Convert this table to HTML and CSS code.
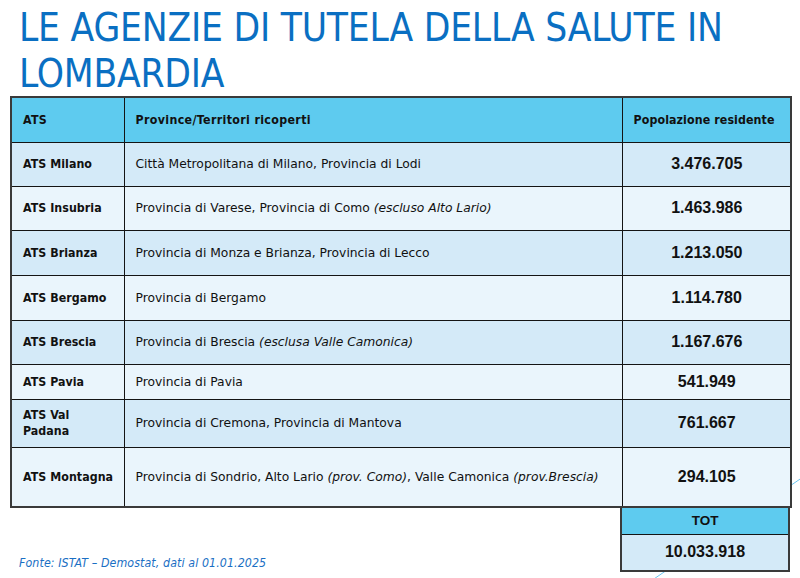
FILE: index.html
```html
<!DOCTYPE html>
<html lang="it">
<head>
<meta charset="utf-8">
<title>Le Agenzie di Tutela della Salute in Lombardia</title>
<link rel="stylesheet" href="styles.css">
</head>
<body>
<div class="slide">
  <svg class="deco" width="800" height="578" viewBox="0 0 800 578" aria-hidden="true">
    <line x1="648" y1="583" x2="806" y2="475" stroke="#6cc6f0" stroke-width="1"/>
  </svg>
  <h1 class="title">LE AGENZIE DI TUTELA DELLA SALUTE IN<br>LOMBARDIA</h1>
  <table class="ats">
    <colgroup>
      <col class="c1"><col class="c2"><col class="c3">
    </colgroup>
    <thead>
      <tr class="h-head">
        <th>ATS</th>
        <th>Province/Territori ricoperti</th>
        <th class="pop">Popolazione residente</th>
      </tr>
    </thead>
    <tbody>
      <tr class="dark h44">
        <td class="name">ATS Milano</td>
        <td>Città Metropolitana di Milano, Provincia di Lodi</td>
        <td class="num">3.476.705</td>
      </tr>
      <tr class="light h44">
        <td class="name">ATS Insubria</td>
        <td>Provincia di Varese, Provincia di Como <em>(escluso Alto Lario)</em></td>
        <td class="num">1.463.986</td>
      </tr>
      <tr class="dark h45">
        <td class="name">ATS Brianza</td>
        <td>Provincia di Monza e Brianza, Provincia di Lecco</td>
        <td class="num">1.213.050</td>
      </tr>
      <tr class="light h45">
        <td class="name">ATS Bergamo</td>
        <td>Provincia di Bergamo</td>
        <td class="num">1.114.780</td>
      </tr>
      <tr class="dark h44">
        <td class="name">ATS Brescia</td>
        <td>Provincia di Brescia <em>(esclusa Valle Camonica)</em></td>
        <td class="num">1.167.676</td>
      </tr>
      <tr class="light h35">
        <td class="name">ATS Pavia</td>
        <td>Provincia di Pavia</td>
        <td class="num">541.949</td>
      </tr>
      <tr class="dark h48">
        <td class="name">ATS Val<br>Padana</td>
        <td>Provincia di Cremona, Provincia di Mantova</td>
        <td class="num">761.667</td>
      </tr>
      <tr class="light h60">
        <td class="name">ATS Montagna</td>
        <td>Provincia di Sondrio, Alto Lario <em>(prov. Como)</em>, Valle Camonica <em>(prov.Brescia)</em></td>
        <td class="num">294.105</td>
      </tr>
    </tbody>
  </table>
  <div class="bottom">
    <p class="source">Fonte: ISTAT – Demostat, dati al 01.01.2025</p>
    <table class="tot">
      <tr class="tot-head"><th>TOT</th></tr>
      <tr class="tot-val"><td>10.033.918</td></tr>
    </table>
  </div>
</div>
</body>
</html>
```
FILE: styles.css
```css
html, body {
  margin: 0;
  padding: 0;
  background: #ffffff;
}

.slide {
  position: relative;
  width: 800px;
  height: 578px;
  overflow: hidden;
  padding: 0 10px;
  box-sizing: border-box;
  font-family: "DejaVu Sans", sans-serif;
  color: #111;
}

.deco {
  position: absolute;
  left: 0;
  top: 0;
  z-index: 0;
}

.title {
  position: relative;
  z-index: 1;
  margin: 0;
  padding: 5px 0 0 9px;
  height: 96px;
  box-sizing: border-box;
  font-family: "DejaVu Sans Condensed", "DejaVu Sans", sans-serif;
  font-weight: normal;
  font-size: 38.5px;
  line-height: 46px;
  letter-spacing: -0.2px;
  color: #0a6fc2;
}

.ats {
  position: relative;
  z-index: 1;
  width: 780px;
  border-collapse: collapse;
  table-layout: fixed;
  border: 2px solid #3a3a3a;
  font-size: 12.3px;
}

.c1 { width: 113px; }
.c2 { width: 498px; }
.c3 { width: 169px; }

.ats th,
.ats td {
  border: 1px solid #141414;
  padding: 0 10px 0 11px;
  text-align: left;
  vertical-align: middle;
  line-height: 16px;
}

.ats th {
  font-family: "DejaVu Sans Condensed", "DejaVu Sans", sans-serif;
  font-weight: bold;
  letter-spacing: 0.35px;
  background: #5ecbef;
}

.ats th.pop {
  letter-spacing: 0.1px;
}

.h-head { height: 45px; }
.h35 { height: 35px; }
.h44 { height: 44px; }
.h45 { height: 45px; }
.h48 { height: 48px; }
.h60 { height: 60px; }

.dark td { background: #d4eaf8; }
.light td { background: #eaf5fc; }

.ats td.name {
  font-family: "DejaVu Sans Condensed", "DejaVu Sans", sans-serif;
  font-weight: bold;
  letter-spacing: 0.05px;
}

.ats em { font-style: italic; }

.ats td.num,
.tot td,
.tot th {
  font-family: "Liberation Sans", Arial, sans-serif;
  font-weight: bold;
  text-align: center;
  font-size: 16px;
  letter-spacing: 0;
  color: #111;
}

.bottom {
  position: relative;
  z-index: 1;
  display: flex;
  align-items: flex-end;
  justify-content: space-between;
}

.source {
  margin: 0 0 2px 9px;
  font-family: "DejaVu Sans Condensed", "DejaVu Sans", sans-serif;
  font-style: italic;
  font-size: 12.3px;
  letter-spacing: 0.1px;
  color: #1a6fc4;
}

.tot {
  margin-top: -2px;
  width: 170px;
  border-collapse: collapse;
  border: 2px solid #3a3a3a;
}

.tot th,
.tot td {
  border: 1px solid #141414;
  padding: 0;
}

.tot-head { height: 27px; }
.tot-head th {
  background: #5ecbef;
  font-size: 13.5px;
}

.tot-val { height: 37px; }
.tot-val td { background: #d4eaf8; }
```
